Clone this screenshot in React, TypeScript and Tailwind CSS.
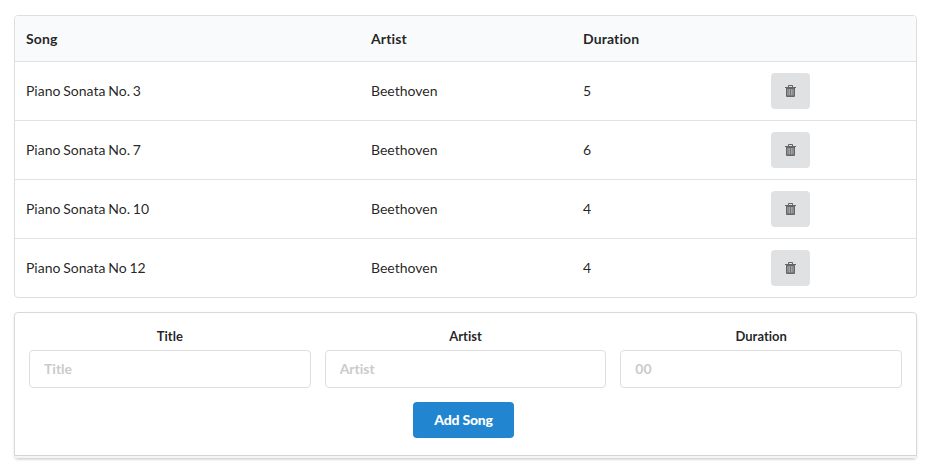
const songs = [
  { song: "Piano Sonata No. 3", artist: "Beethoven", duration: "5" },
  { song: "Piano Sonata No. 7", artist: "Beethoven", duration: "6" },
  { song: "Piano Sonata No. 10", artist: "Beethoven", duration: "4" },
  { song: "Piano Sonata No 12", artist: "Beethoven", duration: "4" },
];

const fields = [
  { label: "Title", placeholder: "Title" },
  { label: "Artist", placeholder: "Artist" },
  { label: "Duration", placeholder: "00" },
];

function TrashIcon() {
  return (
    <svg viewBox="0 0 11 12" className="h-3 w-[11px] fill-[#656667]">
      <path d="M3 2V.8Q3 0 3.8 0H7.2Q8 0 8 .8V2H11V3H10V11Q10 12 9 12H2Q1 12 1 11V3H0V2ZM4 2H7V1H4Z" />
      <path fill="#b4b5b6" d="M2.5 4H3.5V10.5H2.5ZM4.2 4H5.1V10.5H4.2ZM5.9 4H6.8V10.5H5.9ZM7.5 4H8.5V10.5H7.5Z" />
    </svg>
  );
}

const columns = "grid grid-cols-[345px_212px_188px_1fr] items-center pl-[11px]";

export default function App() {
  return (
    <main className="h-[464px] overflow-hidden bg-white pl-[14px] pr-2 pt-[15px] font-['Lato',sans-serif] text-sm text-black/87 [font-variant-ligatures:none]">
      <section className="h-[283px] overflow-hidden rounded border border-[#dededf]">
        <div className={`${columns} h-[45px] bg-[#f9fafb] font-bold tracking-[0.12px]`}>
          <span>Song</span>
          <span>Artist</span>
          <span>Duration</span>
        </div>
        {songs.map((s) => (
          <div key={s.song} className={`${columns} h-[59px] border-t border-[#e1e2e3]`}>
            <span className="[word-spacing:-0.75px]">{s.song}</span>
            <span>{s.artist}</span>
            <span>{s.duration}</span>
            <button aria-label="Delete" className="flex h-9 w-[39px] items-center justify-center rounded bg-[#e0e1e2]">
              <TrashIcon />
            </button>
          </div>
        ))}
      </section>
      <form className="mt-[14px] flex h-[147px] flex-col items-center rounded border border-[#d9d9da] pt-[14px] shadow-[0_1px_2px_rgba(34,36,38,0.15)]">
        <div className="grid w-full grid-cols-3 gap-[14px] px-[14px]">
          {fields.map((f) => (
            <label key={f.label} className="flex flex-col text-center text-[13px] leading-[19px] font-bold">
              {f.label}
              <input
                placeholder={f.placeholder}
                className="mt-1 h-[38px] w-full rounded border border-[#dededf] px-[14px] pb-0.5 text-sm font-bold placeholder:text-[#cbcbcc]"
              />
            </label>
          ))}
        </div>
        <button type="button" className="mt-[14px] mr-1 h-9 w-[101px] rounded bg-[#2185d0] text-sm font-black tracking-[-0.2px] text-white">
          Add Song
        </button>
        <div className="mt-auto h-[3px] w-full border-t border-[#d4d4d5] bg-[#f5f5f5]" />
      </form>
    </main>
  );
}
